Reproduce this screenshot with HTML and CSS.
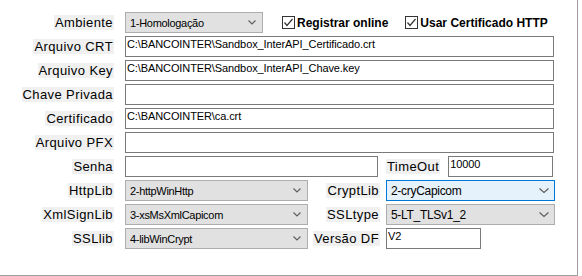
FILE: index.html
```html
<!DOCTYPE html>
<html lang="pt-BR">
<head>
	<meta charset="UTF-8">
	<title>Configuração</title>
	<link rel="stylesheet" href="styles.css">
</head>
<body>
	<div class="panel">
		<div class="row">
			<div class="cap"><span>Ambiente</span></div>
			<div class="combo w-amb"><span>1-Homologação</span><svg class="chev" width="8" height="5" viewBox="0 0 8 5"><polyline points="0.5,0.5 4,4 7.5,0.5" /></svg></div>
			<label class="check first"><svg width="13" height="13" viewBox="0 0 13 13"><rect x="0.5" y="0.5" width="12" height="12" /><polyline points="2.5,6.5 5,9.5 10.5,3" /></svg>Registrar online</label>
			<label class="check second"><svg width="13" height="13" viewBox="0 0 13 13"><rect x="0.5" y="0.5" width="12" height="12" /><polyline points="2.5,6.5 5,9.5 10.5,3" /></svg>Usar Certificado HTTP</label>
		</div>
		<div class="row">
			<div class="cap"><span>Arquivo CRT</span></div>
			<div class="edit w-full">C:\BANCOINTER\Sandbox_InterAPI_Certificado.crt</div>
		</div>
		<div class="row">
			<div class="cap"><span>Arquivo Key</span></div>
			<div class="edit w-full">C:\BANCOINTER\Sandbox_InterAPI_Chave.key</div>
		</div>
		<div class="row">
			<div class="cap"><span>Chave Privada</span></div>
			<div class="edit w-full"></div>
		</div>
		<div class="row">
			<div class="cap"><span>Certificado</span></div>
			<div class="edit w-full">C:\BANCOINTER\ca.crt</div>
		</div>
		<div class="row">
			<div class="cap"><span>Arquivo PFX</span></div>
			<div class="edit w-full"></div>
		</div>
		<div class="row">
			<div class="cap"><span>Senha</span></div>
			<div class="edit w-senha"></div>
			<div class="cap-inline"><span>TimeOut</span></div>
			<div class="edit w-timeout">10000</div>
		</div>
		<div class="row">
			<div class="cap"><span>HttpLib</span></div>
			<div class="combo w-left"><span>2-httpWinHttp</span><svg class="chev" width="8" height="5" viewBox="0 0 8 5"><polyline points="0.5,0.5 4,4 7.5,0.5" /></svg></div>
			<div class="cap2"><span>CryptLib</span></div>
			<div class="combo big focus w-right"><span>2-cryCapicom</span><svg class="chev" width="10" height="5" viewBox="0 0 10 5"><polyline points="0.5,0.5 5,4.5 9.5,0.5" /></svg></div>
		</div>
		<div class="row">
			<div class="cap"><span>XmlSignLib</span></div>
			<div class="combo w-left"><span>3-xsMsXmlCapicom</span><svg class="chev" width="8" height="5" viewBox="0 0 8 5"><polyline points="0.5,0.5 4,4 7.5,0.5" /></svg></div>
			<div class="cap2"><span>SSLtype</span></div>
			<div class="combo big w-right"><span>5-LT_TLSv1_2</span><svg class="chev" width="10" height="5" viewBox="0 0 10 5"><polyline points="0.5,0.5 5,4.5 9.5,0.5" /></svg></div>
		</div>
		<div class="row">
			<div class="cap"><span>SSLlib</span></div>
			<div class="combo w-left"><span>4-libWinCrypt</span><svg class="chev" width="8" height="5" viewBox="0 0 8 5"><polyline points="0.5,0.5 4,4 7.5,0.5" /></svg></div>
			<div class="cap2"><span>Versão DF</span></div>
			<div class="edit w-versao">V2</div>
		</div>
	</div>
</body>
</html>
```

FILE: styles.css
```css
*{
	margin:0;
	padding:0;
	box-sizing:border-box;
}
body{
	background:#fff;
	font-family:"Liberation Sans", Arial, sans-serif;
	color:#000;
}
.panel{
	width:578px;
	height:276px;
	border-right:1px solid #a0a0a0;
	border-bottom:1px solid #a0a0a0;
	padding-top:12px;
	display:flex;
	flex-direction:column;
	gap:3px;
}
.row{
	display:flex;
	align-items:center;
	height:21px;
}
/* labels with the grey form background */
.cap,.cap2,.cap-inline{
	flex:none;
	text-align:right;
	font-size:13px;
	line-height:16px;
	letter-spacing:0.4px;
}
.cap span,.cap2 span,.cap-inline span{
	background:#f0f0f0;
	padding:0 1px;
}
.cap{
	width:114px;
	margin-right:11px;
}
.cap2{
	width:72px;
	margin-right:6px;
}
.cap-inline{
	margin:0 8px 0 8px;
}
/* text boxes */
.edit{
	flex:none;
	height:21px;
	border:1px solid #7a7a7a;
	background:#fff;
	font-size:11px;
	line-height:13px;
	letter-spacing:-0.1px;
	padding:1px 0 0 1px;
	white-space:nowrap;
	overflow:hidden;
}
.w-full{width:429px;}
.w-senha{width:253px;}
.w-timeout{width:105px;}
.w-versao{width:95px;}
/* combo boxes */
.combo{
	flex:none;
	height:21px;
	border:1px solid #adadad;
	background:#e1e1e1;
	display:flex;
	align-items:center;
	justify-content:space-between;
	padding:0 6px 0 4px;
	font-size:11px;
	letter-spacing:-0.3px;
}
.combo.big{
	font-size:12px;
	padding-right:5px;
}
.combo.focus{
	border-color:#0078d7;
	background:#e5f1fb;
}
.chev polyline{
	fill:none;
	stroke:#606060;
	stroke-width:1.2;
}
.w-amb{width:138px;}
.w-left{width:183px;}
.w-right{width:169px;}
/* check boxes */
.check{
	display:flex;
	align-items:center;
	gap:2px;
	font-size:12px;
	font-weight:bold;
}
.check svg rect{
	fill:#fff;
	stroke:#333;
}
.check svg polyline{
	fill:none;
	stroke:#333;
	stroke-width:1.2;
}
.check.first{margin-left:19px;}
.check.second{margin-left:17px;}
```
